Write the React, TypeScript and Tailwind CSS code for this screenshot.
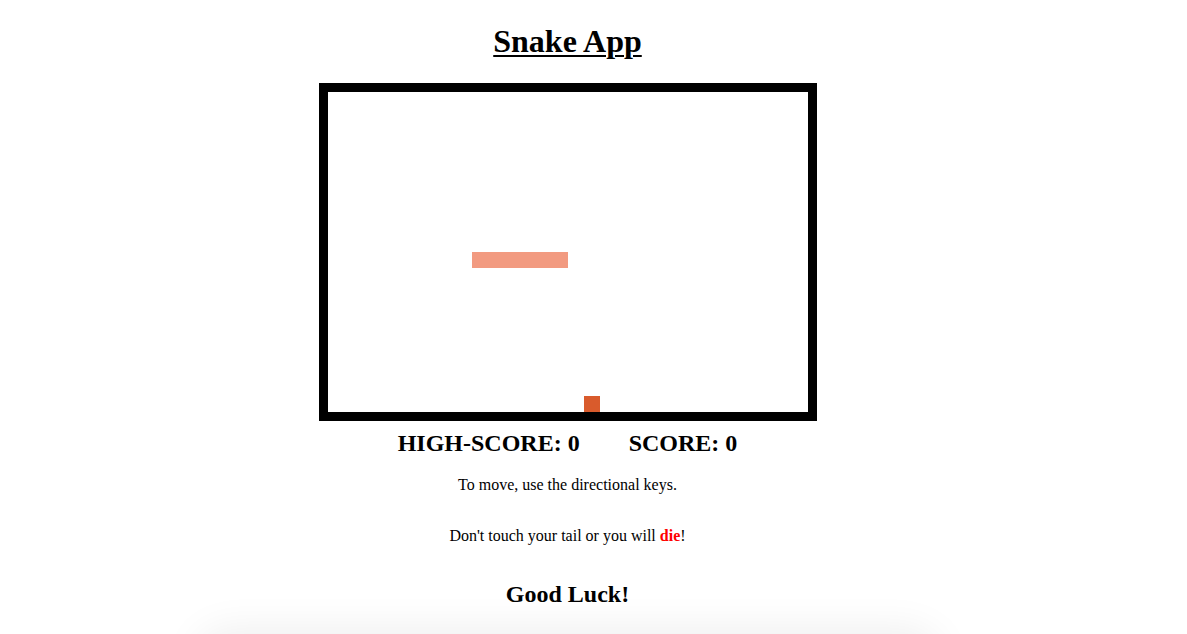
export default function App() {
  const cell = 16
  const snake = [
    { x: 9, y: 10 },
    { x: 10, y: 10 },
    { x: 11, y: 10 },
    { x: 12, y: 10 },
    { x: 13, y: 10 },
    { x: 14, y: 10 },
  ]
  const food = { x: 16, y: 19 }

  return (
    <div className="h-screen overflow-hidden bg-white font-['Liberation_Serif',serif] text-black">
      <div className="flex w-[1135px] flex-col items-center">
        <h1 className="mt-[23px] text-[32px] font-bold leading-[37px] underline decoration-[2px] underline-offset-[3px]">
          Snake App
        </h1>

        {/* Board */}
        <div className="mt-[23px] border-[9px] border-black">
          <div className="relative h-[320px] w-[480px] bg-white">
            {snake.map((s, i) => (
              <div
                key={i}
                className="absolute h-[16px] w-[16px] bg-[#f29a80]"
                style={{ left: s.x * cell, top: s.y * cell }}
              />
            ))}
            <div
              className="absolute h-[16px] w-[16px] bg-[#d95b2c]"
              style={{ left: food.x * cell, top: food.y * cell }}
            />
          </div>
        </div>

        <div className="mt-[8px] flex gap-[49px] text-[24px] font-bold leading-[28px]">
          <span>HIGH-SCORE: 0</span>
          <span>SCORE: 0</span>
        </div>

        <p className="mt-[19px] text-[16px] leading-[18px]">To move, use the directional keys.</p>
        <p className="mt-[33px] text-[16px] leading-[18px]">
          Don't touch your tail or you will <span className="font-bold text-[#ff0000]">die</span>!
        </p>

        <h2 className="mt-[35px] text-[24px] font-bold leading-[28px]">Good Luck!</h2>

        <div className="mt-[34px] h-[40px] w-[720px] rounded-[20px] bg-white shadow-[0_0_40px_12px_rgba(0,0,0,0.07)]" />
      </div>
    </div>
  )
}
